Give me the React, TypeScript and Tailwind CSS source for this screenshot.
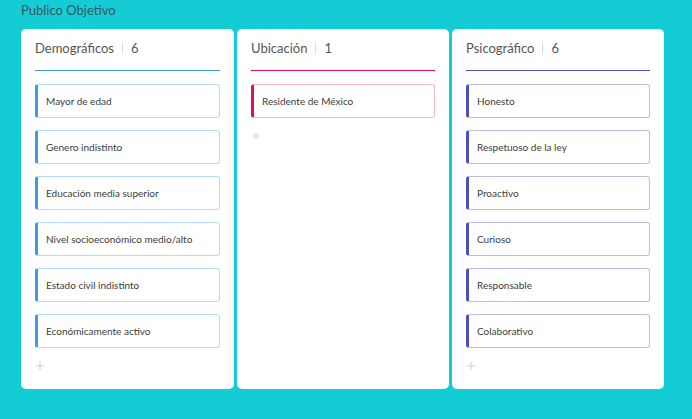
const columns = [
  {
    title: 'Demográficos',
    accent: 'blue',
    width: 'w-[213px]',
    items: [
      'Mayor de edad',
      'Genero indistinto',
      'Educación media superior',
      'Nivel socioeconómico medio/alto',
      'Estado civil indistinto',
      'Económicamente activo',
    ],
  },
  {
    title: 'Ubicación',
    accent: 'pink',
    width: 'w-[212px]',
    items: ['Residente de México'],
  },
  {
    title: 'Psicográfico',
    accent: 'indigo',
    width: 'w-[212px]',
    items: ['Honesto', 'Respetuoso de la ley', 'Proactivo', 'Curioso', 'Responsable', 'Colaborativo'],
  },
];

const styles: Record<string, { line: string; card: string }> = {
  blue: { line: 'bg-[#3d9be9]', card: 'border-[#b5dbf7] border-l-[#3d9be9]' },
  pink: { line: 'bg-[#e0105f]', card: 'border-[#f6b3cb] border-l-[#e0105f]' },
  indigo: { line: 'bg-[#4a4fbd]', card: 'border-[#bcbde2] border-l-[#4a4fbd]' },
};

export default function App() {
  return (
    <div className="w-[692px] h-[419px] bg-[#14cdd4] font-['Lato',sans-serif] text-[#3a3a3a] overflow-hidden">
      <div className="pl-[21px] pt-[1px] h-[29px] text-[13px] text-[#35575c]">Publico Objetivo</div>
      <div className="flex gap-[3px] pl-[21px]">
        {columns.map((col) => (
          <div key={col.title} className={`${col.width} h-[360px] bg-white rounded-[5px] px-[14px] pt-[10px]`}>
            <div className="flex items-start h-[31px]">
              <span className="text-[13px] leading-[18px] text-[#555]">{col.title}</span>
              <span className="mx-[8px] mt-[3px] h-[12px] w-px bg-[#ddd]" />
              <span className="text-[13px] leading-[18px] text-[#555]">{col.items.length}</span>
            </div>
            <div className={`h-px ${styles[col.accent].line} mb-[13px]`} />
            <div className="flex flex-col gap-[12px]">
              {col.items.map((item) => (
                <div
                  key={item}
                  className={`h-[34px] flex items-center pl-[8px] border border-l-[3px] rounded-[3px] text-[10px] text-[#3c3c3c] ${styles[col.accent].card}`}
                >
                  {item}
                </div>
              ))}
            </div>
            <svg className="mt-[14px] ml-[1px]" width="8" height="8" viewBox="0 0 8 8">
              <path d="M4 0v8M0 4h8" stroke="#cfcfcf" strokeWidth="1" />
            </svg>
          </div>
        ))}
      </div>
    </div>
  );
}
